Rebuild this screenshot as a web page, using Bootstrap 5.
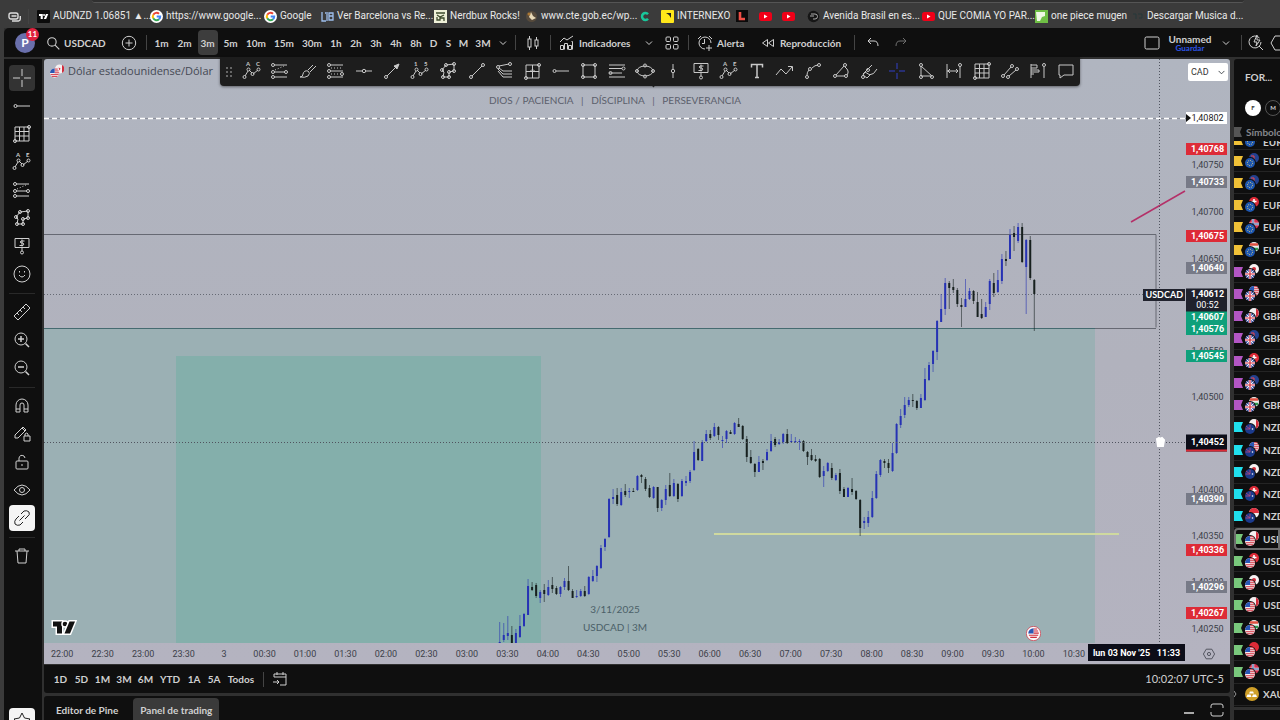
<!DOCTYPE html>
<html lang="es">
<head>
<meta charset="utf-8">
<meta name="viewport" content="width=device-width, initial-scale=1">
<title>USDCAD 1,40612</title>
<link href="https://cdn.jsdelivr.net/npm/bootstrap@5.3.0/dist/css/bootstrap.min.css" rel="stylesheet">
<style>
  :root { --ink:#0f0f0f; --edge:#303030; --fg:#d0d0d0; }
  body { background:#3b3b3b; color:var(--fg); font-family:Lato,"Open Sans",sans-serif; font-size:10px; line-height:14px; }
  button { background:none; border:0; padding:0; color:inherit; font-weight:inherit; }
  a { color:inherit; text-decoration:none; }
  svg { display:block; flex:none; }
  .ico { width:20px; height:20px; fill:none; stroke:currentColor; stroke-width:1; }
  .ico text { fill:currentColor; stroke:none; font-size:6px; font-weight:700; }

  .bookmarks { height:28px; padding-top:4px; display:grid; align-items:center; overflow:hidden; position:relative;
    grid-template-columns:28px 9px 113px 114px 57px 113px 91px 113px 23px 75px 23px 23px 25px 115px 113px 96px 1fr; }
  .bookmarks::before { content:""; position:absolute; top:0; left:92px; right:36px; height:3px; background:#303030; border-bottom:1px solid #555; border-radius:0 0 6px 6px; }
  .bm { display:flex; align-items:center; gap:3px; white-space:nowrap; color:#e8e8e8; font-family:Roboto,sans-serif; }
  .bm svg { width:13px; height:13px; }

  .shell { margin-left:4px; background:var(--edge); }
  .topbar { height:29px; background:var(--ink); border-top-left-radius:5px; font-weight:700; white-space:nowrap; margin-bottom:2px; display:grid; align-items:center;
    grid-template-columns:42px 70px 26px 8px 23px 23px 23px 23px 28px 28px 28px 20px 20px 20px 20px 20px 15px 15px 15px 24px 16px 9px 26px 9px 24px 60px 20px 25px 9px 24px 39px 24px 70px 9px 28px 28px 1fr 28px 48px 24px 6px 24px 12px; }
  .topbar > * { justify-self:center; }
  .topbar > .lefty { justify-self:start; }
  .topbar button { display:flex; align-items:center; justify-content:center; height:25px; }
  .topbar .chosen { background:#3d3d3d; border-radius:4px; width:20px; }
  .vbar { width:1px; height:15px; background:#444; }
  .topbar .who { width:20px; height:20px; border-radius:50%; background:#6a70ac; color:#fff; font-size:12px; position:relative; }
  .who span { position:absolute; left:11px; top:-5px; background:#e0233f; border-radius:50%; width:13px; height:13px; font-size:8px; line-height:13px; text-align:center; }
  .topbar .layoutname { line-height:10px; flex-direction:column; }
  .layoutname small { font-size:8px; line-height:8px; color:#2d55e8; }

  .tools { width:38px; background:var(--ink); padding-top:5px; overflow:hidden; margin-right:2px; }
  .tools button { width:26px; height:26px; margin:1px 2px 1px 0; display:flex; align-items:center; justify-content:center; border-radius:4px; flex:none; }
  .tools .on { background:#333; }
  .tools .lit { background:#f5f5f5; color:#222; }
  .tools hr { width:26px; margin:5px 2px 4px 0; border-color:#777; flex:none; }
  .tools .last-tool { margin-top:auto; margin-bottom:-14px; }

  .chart { background:linear-gradient(#b0b5c0,#b1b2bd 50%,#b4b3c0); color:#3c3f49; border-radius:3px 3px 0 0; position:relative; overflow:hidden; }
  .plot svg.candles { position:absolute; inset:0; width:100%; height:100%; }
  .legend { position:absolute; left:6px; top:5px; font:11px/14px "Open Sans",sans-serif; color:#454954; }
  .legend svg { width:14px; height:14px; }
  .motto { position:absolute; top:34px; width:100%; text-align:center; color:#5c606c; white-space:pre; }
  .stamp { position:absolute; bottom:7px; width:100%; text-align:center; color:#4b6068; line-height:18px; }
  .tvmark { position:absolute; left:7px; bottom:7px; }
  .event { position:absolute; right:145px; bottom:2px; width:15px; height:15px; }
  .tagname { position:absolute; right:1px; background:#20222d; color:#fff; font-size:9px; font-weight:700; line-height:12px; padding:0 2px; transform:translateY(-50%); }
  .scale, .dates { font-family:Roboto,sans-serif; }
  .scale { width:44px; position:relative; font-size:9px; }
  .scale .px { position:absolute; left:0; width:41px; height:12px; line-height:12px; text-align:center; transform:translateY(-50%); padding-left:2px; }
  .scale .tag { color:#fff; font-weight:700; }
  .red { background:#dd2b37; } .gray { background:#777a87; } .green { background:#0fa07b; } .dark { background:#1f212c; }
  .scale .white { background:#fff; color:#222; }
  .scale .tall { height:23px; line-height:11px; }
  .scale .cross { background:#0c0d18; height:17px; line-height:14px; border-bottom:2px solid #dd2b37; }
  .cur { position:absolute; left:2px; top:4px; width:40px; height:18px; padding:0 12px 0 3px; font-size:9px; line-height:18px; border:0; border-radius:2px; color:#333; background-size:7px; background-position:right 3px center; z-index:1; }
  .dates { height:21px; font-size:9px; position:relative; }
  .hours { margin:0 136px 0 -2px; }
  .hours span { flex:1 1 0; text-align:center; }
  .datetag { position:absolute; right:45px; top:1px; width:97px; height:17px; line-height:18px; background:#0c0d18; color:#fff; font-weight:700; text-align:center; white-space:pre; }
  .dates .gear { position:absolute; right:13px; top:3px; width:16px; height:16px; }

  .drawbar { position:absolute; left:50%; top:57px; width:860px; height:29px; background:#1d1d1d; border-radius:0 0 4px 4px; padding-left:18px; box-shadow:0 1px 3px #0007; color:#c8c8c8; z-index:3; transform:translateX(-50%); margin-left:10px; }
  .drawbar button { flex:1 1 0; height:28px; display:flex; align-items:center; justify-content:center; }
  .drawbar .grip { position:absolute; left:5px; top:9px; width:7px; height:12px; background:radial-gradient(circle,#666 1px,transparent 1px) 0 0/4px 4px; }

  .ranges { height:28px; background:var(--ink); margin:1px 0 3px; font-weight:700; border-radius:0 0 3px 3px; display:grid; align-items:center; justify-items:center; padding:0 6px;
    grid-template-columns:21px 21px 21px 22px 21px 28px 20px 20px 34px 10px 24px 1fr; }
  .ranges .clock, .topbar .lefty { font-size:10px; }
  .ranges .clock { font-size:11px; font-weight:400; }
  .dock { height:24px; background:var(--ink); font-weight:700; border-radius:3px 3px 0 0; padding:2px 3px 0 2px; }
  .dock button { height:24px; padding:0 7px 0 10px; border-radius:4px 4px 0 0; }
  .dock .tab-on { background:#3a3a3a; margin-left:8px; padding:0 7px; }

  .watch { width:46px; background:var(--ink); margin-left:4px; overflow:hidden; border-radius:3px 0 0 0; white-space:nowrap; font-weight:700; font-size:10px; }
  .watch .head { height:38px; padding:11px 0 0 11px; }
  .rounds { height:22px; padding-left:11px; }
  .rounds span { width:16px; height:16px; flex:none; border-radius:50%; font-size:6px; line-height:16px; text-align:center; }
  .rounds .f { background:#fff; color:#333; } .rounds .m { border:1px solid #555; line-height:14px; }
  .colhead { height:22px; color:#85878c; padding-top:4px; }
  .quotes > div { flex:1 1 0; min-height:0; border-bottom:1px solid #242424; display:flex; align-items:center; gap:3px; }
  .quotes > .cut { flex:0 0 9px; align-items:flex-end; overflow:hidden; }
  .quotes > .picked { outline:2px solid #6c6c6c; outline-offset:-2px; border-radius:4px 0 0 4px; }
  .quotes svg { width:26px; height:18px; }
  .watch .foot { height:13px; border-top:3px solid var(--edge); margin-top:1px; }
</style>
</head>
<body class="vh-100 d-flex flex-column overflow-hidden">

<svg width="0" height="0" class="position-absolute" aria-hidden="true">
  <defs>
    <g id="g-logo"><circle cx="6.500" cy="6.500" r="6.500" fill="#fff" stroke="none"/><g fill="none" stroke-width="2"><path d="M3.300 4.700A3.700 3.700 0 0 1 9 3.800" stroke="#e94335"/><path d="M3.300 4.700a3.700 3.700 0 0 0 0 3.600" stroke="#fbbc05"/><path d="M3.300 8.300A3.700 3.700 0 0 0 9 9.300" stroke="#34a853"/><path d="M9 9.300a3.700 3.700 0 0 0 1.200-2.800H6.700" stroke="#4285f4"/></g></g>
    <g id="yt"><rect y="2" width="13" height="9" rx="2.500" fill="#f00018"/><path d="M5 4.500v4l3.500-2z" fill="#fff"/></g>
    <g id="tv"><path d="M0 0h9v12H4V5H0z"/><circle cx="12" cy="2.500" r="2.300"/><path d="M16.500 0h5.500l-5 12h-5.500z"/></g>
    <g id="usflag"><circle cx="8" cy="8" r="8" fill="#f4f0f2"/><path d="M8 1h5.500M8 4.200h7M8 7.400h8M1 10.600h14M3 13.800h10" stroke="#d22c3c" stroke-width="1.600"/><path d="M8 0v8H0a8 8 0 0 1 8-8z" fill="#2957b4"/></g>
  </defs>
</svg>

<nav class="bookmarks flex-shrink-0" aria-label="Marcadores">
  <a class="bm ps-2" href="#" aria-label="Grupo"><svg viewBox="0 0 13 13" fill="none" stroke="#ddd" stroke-width="1.400"><rect x="1" y="3" width="9" height="6" rx="2"/><path d="M3.500 6h5M4 11h6.500a2 2 0 0 0 1.800-2V6"/></svg></a>
  <span class="vbar"></span>
  <a class="bm" href="#"><svg viewBox="0 0 13 13"><rect width="13" height="13" rx="1" fill="#0b0b0b"/><use href="#tv" fill="#fff" transform="translate(2 4) scale(.42)"/></svg>AUDNZD 1.06851 ▲...</a>
  <a class="bm" href="#"><svg viewBox="0 0 13 13"><use href="#g-logo"/></svg>https://www.google...</a>
  <a class="bm" href="#"><svg viewBox="0 0 13 13"><use href="#g-logo"/></svg>Google</a>
  <a class="bm" href="#"><svg viewBox="0 0 13 13" fill="none" stroke="#9fc0ee" stroke-width="1.300"><path d="M1 2v9h4M4 3h1M6 2v9M8 3h4v7H8zM8 6h4"/></svg>Ver Barcelona vs Re...</a>
  <a class="bm" href="#"><svg viewBox="0 0 13 13"><rect width="13" height="13" fill="#eef0d8"/><path d="M2 3h9M3 5l3 2 4-2M3 7v3h3V8h4v3" fill="none" stroke="#3d4a2c" stroke-width="1.300"/></svg>Nerdbux Rocks!</a>
  <a class="bm" href="#"><svg viewBox="0 0 13 13"><circle cx="6.500" cy="6.500" r="5.500" fill="#564a3c"/><path d="M6 2l2 4 3 2-4 2-3-3z" fill="#e7d9b8"/><circle cx="4" cy="4" r="1.500" fill="#a73"/></svg>www.cte.gob.ec/wp...</a>
  <a class="bm" href="#" aria-label="C"><svg viewBox="0 0 13 13"><path d="M10 4.300A3.400 3.400 0 1 0 10 8.700" fill="none" stroke="#19c79b" stroke-width="2.500"/></svg></a>
  <a class="bm" href="#"><svg viewBox="0 0 13 13"><rect width="13" height="13" rx="1" fill="#ffe71a"/><path d="M5 3h5v5L8 5z" fill="#222"/></svg>INTERNEXO</a>
  <a class="bm" href="#" aria-label="L"><svg viewBox="0 0 13 13"><rect width="12" height="12" fill="#0a0a0a"/><path d="M4 2v7h5" stroke="#ee4e45" stroke-width="2.600" fill="none"/></svg></a>
  <a class="bm" href="#" aria-label="YouTube"><svg viewBox="0 0 13 13"><use href="#yt"/></svg></a>
  <a class="bm" href="#" aria-label="YouTube"><svg viewBox="0 0 13 13"><use href="#yt"/></svg></a>
  <a class="bm" href="#"><svg viewBox="0 0 13 13"><circle cx="6.500" cy="6.500" r="5.800" fill="#161616"/><path d="M4 4h4a2 2 0 0 1 0 5H6M3 6h4" fill="none" stroke="#aaa"/></svg>Avenida Brasil en es...</a>
  <a class="bm" href="#"><svg viewBox="0 0 13 13"><use href="#yt"/></svg>QUE COMIA YO PAR...</a>
  <a class="bm" href="#"><svg viewBox="0 0 13 13"><rect width="13" height="13" fill="#6fbf45"/><path d="M1 2h9v4l-3 1-2 4H2z" fill="#eef8e4"/></svg>one piece mugen</a>
  <a class="bm" href="#"><svg viewBox="0 0 13 13"><path d="M2 4h3v5M7 4h4v4H8" stroke="#26383a" fill="none"/></svg>Descargar Musica d...</a>
</nav>

<div class="shell flex-grow-1 d-flex flex-column" style="min-height:0">
  <header class="topbar">
    <button class="who" aria-label="Perfil">P<span>11</span></button>
    <button class="lefty gap-1"><svg class="ico" viewBox="0 0 20 20" style="width:14px"><circle cx="8.500" cy="8.500" r="6" stroke-width="1.600"/><path d="M13 13l6 6" stroke-width="1.600"/></svg>USDCAD</button>
    <button aria-label="Comparar"><svg class="ico" viewBox="0 0 20 20"><circle cx="10" cy="10" r="6.700"/><path d="M6.500 10h7M10 6.500v7"/></svg></button>
    <span class="vbar"></span>
    <button>1m</button><button>2m</button><button class="chosen">3m</button><button>5m</button><button>10m</button><button>15m</button><button>30m</button><button>1h</button><button>2h</button><button>3h</button><button>4h</button><button>8h</button><button>D</button><button>S</button><button>M</button><button>3M</button>
    <button data-i="chev" aria-label="Más intervalos"></button>
    <span class="vbar"></span>
    <button data-i="bars" aria-label="Velas"></button>
    <span class="vbar"></span>
    <button data-i="indi" aria-label="Indicadores"></button>
    <button class="lefty">Indicadores</button>
    <button data-i="chev" aria-label="Favoritos"></button>
    <button data-i="four" aria-label="Plantillas"></button>
    <span class="vbar"></span>
    <button data-i="alarm" aria-label="Crear alerta"></button>
    <button class="lefty">Alerta</button>
    <button data-i="rew" aria-label="Retroceder"></button>
    <button class="lefty">Reproducción</button>
    <span class="vbar"></span>
    <button data-i="undo" aria-label="Deshacer"></button>
    <button data-i="redo" class="opacity-50" aria-label="Rehacer"></button>
    <span></span>
    <button data-i="frame" aria-label="Diseño"></button>
    <button class="layoutname">Unnamed<small>Guardar</small></button>
    <button data-i="chev" aria-label="Diseños"></button>
    <span class="vbar"></span>
    <button data-i="quick" aria-label="Búsqueda rápida"></button>
    <button data-i="hex" class="lefty" aria-label="Ajustes"></button>
  </header>

  <div class="flex-grow-1 d-flex" style="min-height:0">
    <aside class="tools d-flex flex-column align-items-center">
      <button class="on" data-i="cross" aria-label="Cruz"></button>
      <button data-i="ray" aria-label="Rayo"></button>
      <button data-i="grid" aria-label="Gann"></button>
      <button data-i="pAE" aria-label="Patrones"></button>
      <button data-i="fib" aria-label="Fibonacci"></button>
      <button data-i="poly" aria-label="Figuras"></button>
      <button data-i="price" aria-label="Nota de precio"></button>
      <button data-i="smile" aria-label="Iconos"></button>
      <hr>
      <button data-i="ruler" aria-label="Medir"></button>
      <button data-i="zin" aria-label="Ampliar"></button>
      <button data-i="zout" aria-label="Reducir"></button>
      <hr>
      <button data-i="magnet" aria-label="Imán"></button>
      <button data-i="penlock" aria-label="Modo de dibujo"></button>
      <button data-i="lock" aria-label="Bloquear"></button>
      <button data-i="eye" aria-label="Ocultar"></button>
      <button class="lit" data-i="link" aria-label="Sincronizar"></button>
      <hr>
      <button data-i="trash" aria-label="Eliminar"></button>
      <button class="lit last-tool" data-i="star" aria-label="Favoritos"></button>
    </aside>

    <main class="flex-grow-1 d-flex flex-column" style="min-width:0">
      <section class="chart flex-grow-1 d-flex flex-column">
        <div class="flex-grow-1 d-flex">
          <div class="plot flex-grow-1 position-relative">
            <svg class="candles" viewBox="44 59 1142 584" preserveAspectRatio="none">
              <rect x="44" y="328" width="1051" height="315" fill="#9bb0b4"/>
              <rect x="176" y="356" width="365" height="287" fill="#84afab"/>
              <path d="M44 234.500H1156V327.500" fill="none" stroke="#666973"/>
              <path d="M44 328.500H1095" stroke="#456b70"/><path d="M1095 328.500H1156" stroke="#666973"/>
              <path d="M44 118.500H1186" stroke="#8e929c"/>
              <path d="M44 118.500H1186" stroke="#fff" stroke-width="1.500" stroke-dasharray="5 3"/>
              <path d="M44 294.500H1186" stroke="#666a75" stroke-dasharray="1 2"/>
              <path d="M1131 222L1185 191" stroke="#b43068" stroke-width="1.500"/>
              <path d="M714 534H1119" stroke="#cfd99f" stroke-width="2"/>
              <path d="M655 84l-2 3" stroke="#333" stroke-width="1.500"/>
              <g id="candleLayer"></g>
              <path d="M44 442.500H1186M1159.500 59V643" stroke="#50545f" stroke-dasharray="1 2"/>
              <path d="M1157 439l1 7h5l1-6-2-2-2 1-1-1z" fill="#fff" stroke="#fff" stroke-width="2"/>
            </svg>
            <div class="legend d-flex align-items-center gap-1"><svg viewBox="0 0 28 28"><circle cx="19" cy="10" r="9" fill="#f5f0f2"/><path d="M24 2a9 9 0 0 1 0 16zM17 7l4 2-2 4z" fill="#d22c3c"/><use href="#usflag" transform="translate(0 9) scale(1.150)"/></svg>Dólar estadounidense/Dólar</div>
            <div class="motto">DIOS / PACIENCIA   |   DÍSCIPLINA   |   PERSEVERANCIA</div>
            <div class="stamp">3/11/2025<br>USDCAD | 3M</div>
            <svg class="tvmark" width="26" height="17" viewBox="-2 -2 26 16"><use href="#tv" fill="#111" stroke="#fff" stroke-width="3" paint-order="stroke"/></svg>
            <svg class="event" viewBox="-2 -2 20 20"><circle cx="8" cy="8" r="9.500" fill="#fff" stroke="#cf3848"/><use href="#usflag" transform="translate(1 1) scale(.88)"/></svg>
            <span class="tagname" id="symTag">USDCAD</span>
          </div>
          <div class="scale" id="scale">
            <select class="form-select cur" aria-label="Divisa"><option>CAD</option></select>
          </div>
        </div>
        <div class="dates">
          <div class="hours d-flex h-100 align-items-center" id="hours"></div>
          <span class="datetag">lun 03 Nov '25   11:33</span>
          <svg class="gear ico" viewBox="0 0 20 20"><path d="M6.500 4h7l3.500 6-3.500 6h-7L3 10z"/><circle cx="10" cy="10" r="2"/></svg>
        </div>
      </section>
      <div class="ranges">
        <button>1D</button><button>5D</button><button>1M</button><button>3M</button><button>6M</button><button>YTD</button><button>1A</button><button>5A</button><button>Todos</button>
        <span class="vbar"></span>
        <button data-i="cal" aria-label="Ir a"></button>
        <button class="clock ms-auto">10:02:07 UTC-5</button>
      </div>
      <footer class="dock d-flex">
        <button>Editor de Pine</button><button class="tab-on">Panel de trading</button>
        <button data-i="min" class="ms-auto p-0 me-2" aria-label="Minimizar"></button>
        <button data-i="max" class="p-0" aria-label="Maximizar"></button>
      </footer>
    </main>

    <aside class="watch d-flex flex-column">
      <div class="head">FOR...</div>
      <div class="rounds d-flex align-items-center gap-1"><span class="f">F</span><span class="m">M</span></div>
      <div class="colhead d-flex align-items-center gap-1"><svg width="8" height="10" viewBox="0 0 8 10"><path d="M0 0h8L6 5l2 5H0z" fill="#555"/></svg>Símbolo</div>
      <div class="quotes flex-grow-1 d-flex flex-column" id="quotes"></div>
      <div class="foot"></div>
    </aside>
  </div>
</div>

<div class="drawbar d-flex" id="drawbar"><span class="grip"></span></div>

<script>
const dot = (x, y) => `<circle cx="${x}" cy="${y}" r="1.500"/>`;
const pattern = (a, b) => `<path d="M3 15l3-5M7 9l3 3M11 13l5-4"/>${dot(2.5,16)}${dot(6.500,8.500)}${dot(10.500,13)}${dot(16.500,8.500)}<text x="4" y="5">${a}</text><text x="14" y="5">${b}</text>`;
const icons = {
  chev:'<path d="M7 8.500l3 3 3-3"/>',
  bars:'<path d="M6.500 3v3M6.500 14v3M13.500 4v3M13.500 13v3"/><rect x="5" y="6" width="3" height="8"/><rect x="12" y="7" width="3" height="6"/>',
  indi:'<path d="M3.500 16.500v-4h3v4zM7.500 16.500v-6h3v6M11.500 16.500v-4h3v4zM3 9l4-4 3 2 6-4"/><path d="M15.500 16.500v-8h-1"/>',
  four:'<rect x="4" y="4" width="4.500" height="4.500" rx="1"/><rect x="11.500" y="4" width="4.500" height="4.500" rx="1"/><rect x="4" y="11.500" width="4.500" height="4.500" rx="1"/><rect x="11.500" y="11.500" width="4.500" height="4.500" rx="1"/>',
  alarm:'<path d="M16 10a6 6 0 1 0-6 6M9.500 6v4.500H7M3 6l3-3M14 3l3 3M14 12v6M11 15h6"/>',
  rew:'<path d="M9.500 6.500v7L4.500 10zM15.500 6.500v7L10.500 10z"/>',
  undo:'<path d="M8 5L5 8l3 3M5 8h6q4 0 4 5"/>', redo:'<path d="M12 5l3 3-3 3M15 8H9q-4 0-4 5"/>',
  frame:'<rect x="3" y="4" width="14" height="12" rx="1.500"/>',
  quick:'<path d="M13.500 5A6 6 0 1 0 15 9M13 13l4 4M11 2L8 9h3l-1 4 4-6h-3z"/>',
  hex:'<path d="M7 3h8l4 7-4 7H7l-4-7z"/>',
  cross:'<path d="M10 1v7M10 12v7M1 10h7M12 10h7"/>',
  hline:'<path d="M2 10h6M12 10h6"/><circle cx="10" cy="10" r="1.700"/>',
  ray:`${dot(3.500,10)}<path d="M5 10h13"/>`,
  grid:`<path d="M3 3h14v14H3zM3 7.500h14M3 12h14M7.500 3v14M12 3v14"/>${dot(17,3)}${dot(3,17)}`,
  pAC:pattern('A','C'), pAE:pattern('A','E'), p15:pattern('1','5'),
  fib:`<path d="M4 4h13M4 11h11M4 16h13" /><path d="M5 9l9-4" stroke-dasharray="1 2"/>${dot(3,4)}${dot(3,11)}${dot(16,11)}${dot(3,16)}`,
  fib2:`<path d="M4 4h13M4 10h13M4 16h13"/><path d="M5 7h11M5 13h11" stroke-dasharray="1 2"/>${dot(3,4)}${dot(3,10)}${dot(16,13)}${dot(3,16)}`,
  brush:'<path d="M2 16q3 0 3-3 1-4 5-3 3 2 0 5-3 2-8 1zM10 9l5-5M12 11l6-6"/>',
  arrow:`${dot(4,16)}<path d="M5 15L15 5"/><path d="M17 3l-5 2 3 3z" fill="currentColor"/>`,
  line:`${dot(4,16)}${dot(16,4)}<path d="M5 15L15 5"/>`,
  poly:`<path d="M4 9l4-5 8-1v7l-5 1v5H5l1-5z"/>${dot(4,9)}${dot(8,4)}${dot(16,3)}${dot(16,10)}${dot(11,11)}${dot(11,16)}${dot(5,16)}`,
  fan:`${dot(3,6)}${dot(15,3)}<path d="M4 5l10-2M4 7l4 3h9M3 8l5 5h9M3 10l5 6h9"/>`,
  box4:`<path d="M3 4h13v13H3zM3 10.500h13M9.500 4v13M7 10.500l2-2M12 10.500l-2-2"/>${dot(3,17)}${dot(16,4)}`,
  rect:`<path d="M4 4h12v12H4z"/>${dot(4,4)}${dot(16,4)}${dot(4,16)}${dot(16,16)}`,
  fib3:`<path d="M2 4h16M2 7.500h13M2 12h13M2 16h16"/>${dot(16.500,7.500)}${dot(3.500,12)}`,
  ell:`<ellipse cx="10" cy="10" rx="8" ry="5"/>${dot(2,10)}${dot(18,10)}${dot(10,4.500)}${dot(10,15.500)}`,
  vline:'<path d="M10 3v5M10 12v5"/><circle cx="10" cy="10" r="1.700"/>',
  price:`<path d="M3 2.500h14v9H3zM10 12v3M12.500 5H9q-1.500 1 0 2h2q1.500 1 0 2.500H7.500M10 3.500v7"/>${dot(10,16.500)}`,
  text:'<path d="M4.500 6.500v-3h11v3M10 3.500v13M8 16.500h4" stroke-width="1.500"/>',
  zig:'<path d="M1 14l5-6 5 5 6-7M13 5.500h4.500V10"/>',
  curve:`${dot(4,16)}${dot(16,4)}${dot(7,8)}<path d="M4 14q0-3 2-5M9 7q3-3 6-3"/>`,
  tri:`${dot(4,15)}${dot(15,15)}${dot(14,4)}<path d="M5 14l8-9M6 15h8M14 6q5 4 2 8"/>`,
  pitch:`<path d="M4 13l9-9M10 14q5 0 8-6M4 14l2-3 5 3-3 3z"/>${dot(4,16)}${dot(9,9)}`,
  blue:'<g stroke="#3340c8"><path d="M10 2v6M10 12v6M2 10h6M12 10h6"/></g>',
  tri2:`<path d="M5 15V5l11 10z"/>${dot(5,4)}${dot(5,16)}${dot(16,16)}`,
  range:`<path d="M3 3v14M3 10h11M16 5v12"/>${dot(16,4)}<path d="M6 8l-2 2 2 2M12 8l2 2-2 2"/>`,
  chan:`${dot(3,15)}${dot(12,5)}${dot(8,16)}${dot(17,8)}<path d="M4 14l7-8M9 15l7-6"/>`,
  vol:`<path d="M3 3v14M3 4h6v3H3M3 9h8v2H3M3 13h3M16 6v11"/>${dot(16,4)}`,
  note:'<path d="M3 4h14v10H8l-4 3v-3H3z"/>',
  smile:'<circle cx="10" cy="10" r="8"/><path d="M7.500 7v1.500M12.500 7v1.500M7 11q3 4 6 0"/>',
  ruler:'<path d="M2 14L14 2l4 4L6 18zM5 11l2 2M8 8l2 2M11 5l2 2"/>',
  zin:'<circle cx="9" cy="9" r="6"/><path d="M13.500 13.500L17 17M6 9h6M9 6v6" stroke-width="1.500"/>',
  zout:'<circle cx="9" cy="9" r="6"/><path d="M13.500 13.500L17 17M6 9h6" stroke-width="1.500"/>',
  magnet:'<path d="M4 16V9a6 6 0 0 1 12 0v7h-4V9a2 2 0 0 0-4 0v7zM4 13h4M12 13h4"/>',
  penlock:'<path d="M3 14v-3l8-8 3 3-8 8zM10 4l3 3M12 12h6v5h-6zM13 12v-2q2-2 3 0v2"/>',
  lock:'<rect x="4" y="9" width="12" height="8" rx="1"/><path d="M7 9V6q1-4 5-2l1 2M10 12v2" />',
  eye:'<path d="M2 10q8-10 16 0-8 10-16 0z"/><circle cx="10" cy="10" r="2.500"/>',
  link:'<path d="M9 6l3-3q3-1 5 1 1 3-1 4l-3 3M11 14l-3 3q-3 1-5-1-1-3 1-5l3-3M7.500 12.500l5-5"/>',
  trash:'<path d="M3 5h14M7 5V3h6v2M5 5l1 12h8l1-12"/>',
  star:'<path d="M10 2l2.500 5 5.500 1-4 4 1 6-5-3-5 3 1-6-4-4 5.500-1z"/>',
  cal:'<path d="M4 8V5h12v11h-6M4 8h12M7 3v3M13 3v3M3 13h6M7 11l2 2-2 2"/>',
  min:'<path d="M5 13h10" stroke-width="1.600"/>',
  max:'<path d="M4 8V6q0-2 2-2h8q2 0 2 2v2M16 12v2q0 2-2 2H6q-2 0-2-2v-2"/>'
};
const draw = n => `<svg class="ico" viewBox="0 0 20 20" aria-hidden="true">${icons[n]}</svg>`;
document.querySelectorAll('[data-i]').forEach(b => b.innerHTML = draw(b.dataset.i));
'pAC fib brush fib2 hline arrow p15 poly line fan box4 ray rect fib3 ell vline price pAE text zig curve tri pitch blue tri2 range grid chan vol note'
  .split(' ').forEach(n => document.getElementById('drawbar').insertAdjacentHTML('beforeend', `<button aria-label="${n}">${draw(n)}</button>`));

/* high, body top, body bottom, low, direction (b up, k down) */
const series = `622 642 643 643 b;623 635 640 642 b;616 633 636 640 b;626 635 643 643 k;629 633 643 643 b;615 626 637 638 b;613 614 626 627 b;579 586 615 615 b;582 587 590 591 k;583 585 596 598 k;590 592 598 603 b;584 590 594 602 k;580 587 595 596 b;577 585 589 593 k;586 588 594 595 k;586 587 594 597 b;578 581 587 590 b;566 581 590 591 k;589 591 598 598 k;590 596 597 598 b;589 591 596 597 b;586 591 596 597 k;576 577 594 595 b;570 576 581 582 b;565 566 576 582 b;545 548 568 569 b;538 539 547 551 b;498 499 537 538 b;489 497 499 504 b;488 495 504 506 k;488 492 505 506 b;484 491 495 497 k;488 491 492 498 b;488 491 492 492 k;475 476 490 491 b;474 475 477 483 k;477 479 489 491 k;485 488 497 498 k;486 487 498 499 b;487 487 508 512 k;499 500 508 511 b;485 489 500 505 b;473 485 496 497 k;479 483 496 497 b;483 484 499 502 k;479 481 496 497 b;476 481 483 486 b;470 472 481 483 b;441 452 470 471 b;448 449 460 461 k;440 442 461 461 b;430 434 441 442 b;430 434 438 440 k;423 427 436 437 b;426 427 435 440 k;436 440 441 448 b;430 431 439 443 b;430 432 434 434 k;422 423 434 435 b;418 424 427 427 k;425 426 439 440 k;436 439 457 462 k;450 457 463 464 k;463 464 472 477 k;456 462 472 472 b;459 461 463 470 k;449 452 460 461 b;434 441 451 452 b;437 439 445 447 k;439 442 444 445 b;433 434 442 444 b;429 434 443 444 k;434 441 442 443 b;437 441 442 443 b;439 441 442 450 b;440 441 451 452 k;451 452 457 465 k;449 455 460 461 k;455 459 461 462 k;458 459 477 478 k;466 471 476 487 b;462 463 471 472 b;463 468 478 480 k;473 475 480 481 b;469 473 491 494 k;487 489 497 497 k;487 488 497 497 b;478 489 492 495 k;490 491 499 500 k;499 500 528 536 k;517 521 523 529 b;511 517 523 527 b;491 498 517 518 b;471 474 498 499 b;459 460 475 477 b;459 461 463 468 k;459 463 468 473 k;443 453 471 472 b;423 424 453 454 b;409 416 425 428 b;397 405 415 418 b;397 400 405 407 b;394 400 401 407 k;400 401 408 410 k;394 398 408 408 b;368 379 400 401 b;362 365 380 381 b;350 351 364 372 b;320 321 352 360 b;294 309 322 322 b;278 283 309 315 b;281 283 288 309 k;279 287 290 293 k;288 290 304 307 k;298 305 307 327 k;279 299 307 307 b;288 291 299 300 b;290 291 301 304 k;292 302 317 317 k;299 314 318 319 k;302 307 317 317 b;279 281 304 310 b;273 283 293 297 k;270 280 292 293 b;254 259 281 284 b;251 259 261 266 k;229 235 259 259 b;226 233 237 251 k;223 227 241 243 b;223 227 262 263 k;239 240 267 314 b;236 240 278 280 k;279 280 294 331 k`;
document.getElementById('candleLayer').innerHTML = series.split(';').map((row, i) => {
  const [hi, top, bot, lo, dir] = row.split(' ');
  const x = 499.7 + i * 4.05, c = dir === 'b' ? '#2632b4' : '#17201f';
  return `<path d="M${x} ${hi}V${lo}" stroke="${c}" stroke-width=".8" opacity=".75"/><path d="M${x} ${top}V${Math.max(+bot, +top + 1)}" stroke="${c}" stroke-width="2"/>`;
}).join('');

const pct = y => (y - 59) / 584 * 100 + '%';
const prices = [
  ['1,40750',165],['1,40700',212],['1,40650',259],['1,40550',351],['1,40500',397],['1,40400',490],['1,40350',536],['1,40300',582],['1,40250',629],
  ['1,40802',118,'white'],['1,40768',149,'tag red'],['1,40733',182,'tag gray'],['1,40675',236,'tag red'],['1,40640',268,'tag gray'],
  ['1,40607',317,'tag green'],['1,40576',329,'tag green'],['1,40545',356,'tag green'],['1,40612<br><span class="fw-normal">00:52</span>',300,'tag dark tall'],
  ['1,40452',443,'tag cross'],['1,40390',499,'tag gray'],['1,40336',550,'tag red'],['1,40296',587,'tag gray'],['1,40267',613,'tag red']];
document.getElementById('scale').insertAdjacentHTML('beforeend', prices.map(([t, y, c = '']) => `<div class="px ${c}" style="top:${pct(y)}">${t}</div>`).join('')
  + `<svg width="5" height="8" class="position-absolute translate-middle-y" style="top:${pct(118)}"><path d="M0 0l5 4-5 4z" fill="#111"/></svg>`);
document.getElementById('symTag').style.top = pct(295);

const hh = ['22:00','22:30','23:00','23:30','3'];
for (let m = 30; m <= 630; m += 30) hh.push(String(Math.floor(m / 60)).padStart(2, '0') + ':' + (m % 60 ? '30' : '00'));
document.getElementById('hours').innerHTML = hh.map(t => `<span>${t}</span>`).join('');

/* watchlist: front flag, colour mark, back flags in row order */
const fronts = {
  EUR:'<circle cx="16" cy="11" r="5" fill="#1d56b0"/><circle cx="16" cy="11" r="2.600" fill="none" stroke="#e8d47a" stroke-dasharray="1 1"/>',
  GBP:'<circle cx="16" cy="11" r="5" fill="#3b4fa0"/><path d="M12.500 7.500l7 7M19.500 7.500l-7 7" stroke="#eee"/><path d="M16 6v10M11 11h10" stroke="#fff" stroke-width="2.600"/><path d="M16 6v10M11 11h10" stroke="#d22c3c" stroke-width="1.200"/>',
  NZD:'<circle cx="16" cy="11" r="5" fill="#1b3a8c"/><path d="M12 8l4 3M16 7v4h-4.500" stroke="#c24a78" fill="none" stroke-width=".8"/><circle cx="18.500" cy="11" r=".8" fill="#fff"/>',
  USD:'<use href="#usflag" transform="translate(11 6) scale(.63)"/>' };
const marks = { EUR:'#f0c137', GBP:'#b356c4', NZD:'#20e0ee', USD:'#79c87c' };
const backs = {
  a:'<circle cx="20" cy="6" r="5" fill="#24418f"/><path d="M17 4h3v3" stroke="#e44" fill="none"/>',
  c:'<circle cx="20" cy="6" r="5" fill="#f3eef0"/><path d="M22 1.500a5 5 0 0 1 0 9zM18 1.500v3z" fill="#d22c3c"/>',
  h:'<circle cx="20" cy="6" r="5" fill="#dd2b37"/><path d="M20 3v5M17.500 5.500h5" stroke="#fff" stroke-width="1.600"/>',
  n:'<circle cx="20" cy="6" r="5" fill="#cf3050"/><path d="M19 1v10M15 6h10" stroke="#fff" stroke-width="2.400"/><path d="M19 1v10M15 6h10" stroke="#24418f"/>',
  z:'<circle cx="20" cy="6" r="5" fill="#eee"/><path d="M16 3.500h8" stroke="#e05040" stroke-width="2.500"/><path d="M16 8h8" stroke="#2e9a50" stroke-width="2.500"/>',
  j:'<circle cx="20" cy="6" r="5" fill="#f5f2f2"/><circle cx="20" cy="6" r="2" fill="#d22c3c"/>',
  s:'<circle cx="20" cy="6" r="5" fill="#f3eef0"/><path d="M15 6a5 5 0 0 1 10 0z" fill="#e03040"/>',
  u:'<use href="#usflag" transform="translate(15 1) scale(.63)"/>', r:'<circle cx="20" cy="6" r="5" fill="#dd2b37"/>' };
const quote = (s, b, cls = '') => `<div class="${cls}"><svg viewBox="0 0 26 18"><path d="M0 4h9L7 9l2 5H0z" fill="${marks[s]}"/>${backs[b]}<g stroke="none"><circle cx="16" cy="11" r="6" fill="#0f0f0f"/></g>${fronts[s]}</svg>${s}</div>`;
let html = quote('EUR', 'a', 'cut');
[['EUR','aahnz'],['GBP','jucahaz'],['NZD','cujhs'],['USD','chjczrn']].forEach(([s, list]) => [...list].forEach((b, i) => html += quote(s, b, s === 'USD' && !i ? 'picked' : '')));
html += '<div><svg viewBox="0 0 26 18"><path d="M0 6l2 3-2 3" fill="none" stroke="#999"/><circle cx="18" cy="9" r="7" fill="#cf9f28"/><path d="M15 8.500l1-2h3l1 2zM12.500 12l1-2.500h3l1 2.500zM18 12l1-2.500h3l1 2.500z" fill="#fff"/></svg>XAU</div>';
document.getElementById('quotes').innerHTML = html;
</script>
<script src="https://cdn.jsdelivr.net/npm/bootstrap@5.3.0/dist/js/bootstrap.bundle.min.js"></script>
</body>
</html>
